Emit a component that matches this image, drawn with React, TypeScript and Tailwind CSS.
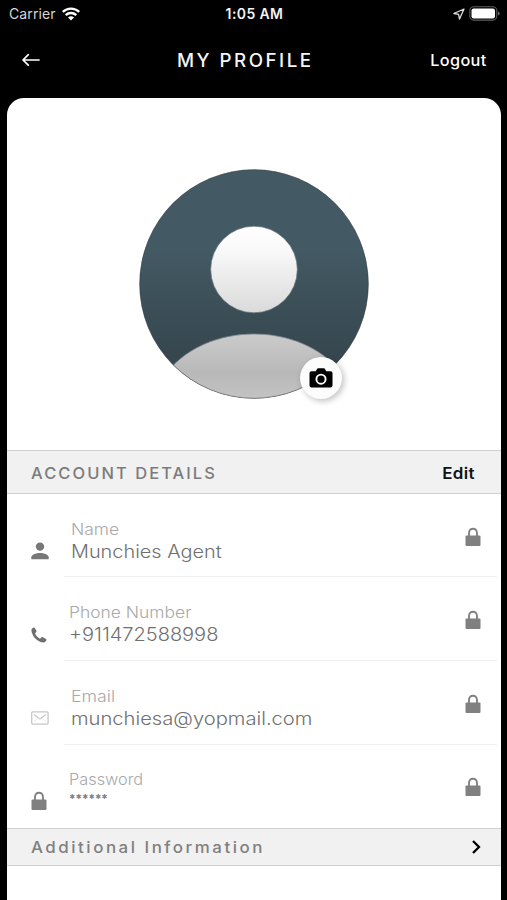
import type { ReactNode } from 'react';

function LockIcon() {
  return (
    <svg viewBox="0 0 16 20" className="block h-5 w-4" fill="none">
      <path d="M4 9V6.2C4 3.4 5.6 1.8 8 1.8s4 1.6 4 4.4V9" stroke="#808080" strokeWidth="1.9" />
      <rect x="0.5" y="8.6" width="15" height="10.4" rx="1" fill="#808080" />
    </svg>
  );
}

function PersonIcon() {
  return (
    <svg viewBox="0 0 18 18" className="block size-[18px]" fill="#777">
      <circle cx="9" cy="4.6" r="4.2" />
      <path d="M0.3 17.2v-2c0-2.5 5-4.1 8.7-4.1s8.7 1.6 8.7 4.1v2z" />
    </svg>
  );
}

function PhoneIcon() {
  return (
    <svg viewBox="0 0 16 16" className="mt-0.5 block size-4" fill="#6f6f6f">
      <path d="M0.4 3.2C.3 2.3 1.3 1 2.5.5c.6-.2 1 0 1.3.5l1.6 2.7c.3.6.2 1-.2 1.4l-.8.9c-.3.3-.3.6-.1 1 .9 1.7 2.400 3.200 4.300 4.400.4.2.7.2 1-.1l1-1c.4-.4.8-.4 1.300-.1l3.100 1.800c.5.3.6.8.4 1.300-.5 1.200-1.600 2.200-2.800 2.200C6.300 15.300.900 9 .400 3.200z" />
    </svg>
  );
}

function MailIcon() {
  return (
    <svg viewBox="0 0 18 14" className="mt-0.5 block h-3.5 w-[18px]" fill="none" stroke="#c8c8c8" strokeWidth="1.3">
      <rect x="0.7" y="0.9" width="16.4" height="12.2" rx="1.2" />
      <path d="M3 3.500l5 4c.6.4 1.200.4 1.800 0l5-4" />
      <path d="M3 11l3.200-3.200M14.800 11l-3.200-3.200" stroke="#e2e2e2" strokeWidth="0.8" />
    </svg>
  );
}

function StatusBar() {
  return (
    <div className="grid h-7 grid-cols-3 items-center pl-[9px] pr-[7px] text-[14px] leading-[28px]">
      <div className="flex items-center gap-[6px]">
        <span className="tracking-[0.12px] text-[#d6d6d6]">Carrier</span>
        <svg viewBox="0 0 18 14" className="-mt-px h-3.5 w-[18px]" fill="none" stroke="#fff" strokeWidth="2.3">
          <path d="M0.800 4.800C5.400.500 12.600.500 17.200 4.800" />
          <path d="M3.700 8.100c3-2.800 7.600-2.800 10.600 0" />
          <path d="M6 10.400c1.700-1.500 4.300-1.500 6 0L9 13.600z" fill="#fff" stroke="none" />
        </svg>
      </div>
      <span className="text-center font-semibold tracking-[0.400px] text-[#f2f2f2]">1:05 AM</span>
      <div className="flex items-center justify-end gap-[4px]">
        <svg viewBox="0 0 12 12" className="size-3" fill="none" stroke="#ddd" strokeWidth="1.300" strokeLinejoin="round">
          <path d="M11 1L.9 5.500l4.700.9.900 4.700z" />
        </svg>
        <svg viewBox="0 0 31 15" className="-mt-px h-[15px] w-[31px]">
          <rect x="0.800" y="0.700" width="27" height="13.400" rx="4" fill="none" stroke="#5e5e5e" strokeWidth="1.100" />
          <rect x="2.500" y="2.400" width="23.500" height="10" rx="2.200" fill="#fff" />
          <path d="M29 5.200q1.700.7 1.700 2.200T29 9.600z" fill="#6a6a6a" />
        </svg>
      </div>
    </div>
  );
}

function Header() {
  return (
    <header className="grid h-[70px] grid-cols-[154px_1fr_auto] items-center pb-[6px] pl-[23px] pr-[21px]">
      <svg viewBox="0 0 18 14" className="-ml-px h-3.5 w-[18px]" fill="none" stroke="#fff" strokeWidth="1.700" strokeLinecap="round" strokeLinejoin="round">
        <path d="M17 7H1.200M6.300 1.700L1 7l5.300 5.200" />
      </svg>
      <h1 className="origin-left scale-x-[1.04] pt-px text-[18px] font-medium leading-6 tracking-[2.400px] text-[#f4f4f4]">MY PROFILE</h1>
      <span className="origin-right scale-x-[1.05] pt-px text-right text-[15.500px] font-medium leading-6 tracking-[0.300px]">Logout</span>
    </header>
  );
}

function Avatar() {
  return (
    <div className="relative size-[232px]">
      <svg viewBox="0 0 232 232" className="block size-[232px]">
        <defs>
          <linearGradient id="bg" x1="0" y1="0" x2="0" y2="1">
            <stop offset="0" stopColor="#435a64" />
            <stop offset="0.35" stopColor="#435963" />
            <stop offset="0.800" stopColor="#36474f" />
            <stop offset="1" stopColor="#36474f" />
          </linearGradient>
          <linearGradient id="head" x1="0" y1="0" x2="0" y2="1">
            <stop offset="0" stopColor="#fff" />
            <stop offset="0.300" stopColor="#f8f8f8" />
            <stop offset="1" stopColor="#dadada" />
          </linearGradient>
          <linearGradient id="body" x1="0" y1="0" x2="0" y2="1">
            <stop offset="0" stopColor="#cbcbcb" />
            <stop offset="0.600" stopColor="#b8b8b8" />
            <stop offset="1" stopColor="#c4c4c4" />
          </linearGradient>
          <clipPath id="disc">
            <circle cx="116" cy="116" r="114.500" />
          </clipPath>
        </defs>
        <circle cx="116" cy="116" r="114.500" fill="url(#bg)" />
        <path clipPath="url(#disc)" d="M30 203C50 179 82 166 116 166s66 13 86 37v29H30z" fill="url(#body)" stroke="#7c868b" strokeWidth="0.800" />
        <circle cx="116" cy="101.500" r="43.300" fill="url(#head)" stroke="#68777e" strokeWidth="0.700" />
        <circle cx="116" cy="116" r="114.300" fill="none" stroke="#3d4143" strokeOpacity="0.600" strokeWidth="0.800" />
      </svg>
      <button className="absolute left-[162px] top-[189px] flex size-[42px] items-center justify-center rounded-full bg-[#fcfcfc] shadow-[2px_2px_6px_rgba(0,0,0,0.250)]">
        <svg viewBox="0 0 24 20" className="h-5 w-6">
          <path d="M2.500 3.300h4.200l1.500-2.500q.3-.5.900-.5h5.800q.6 0 .9.500l1.500 2.500h4.200q2 0 2 2v12.200q0 2-2 2h-19q-2 0-2-2V5.300q0-2 2-2z" fill="#000" />
          <circle cx="12" cy="11.200" r="4.600" fill="none" stroke="#fff" strokeWidth="1.900" />
        </svg>
      </button>
    </div>
  );
}

interface FieldProps {
  icon: ReactNode;
  label: ReactNode;
  value: ReactNode;
  height: string;
  last?: boolean;
}

function Field({ icon, label, value, height, last }: FieldProps) {
  return (
    <div className={`flex ${height}`}>
      <div className={`flex w-[57px] shrink-0 items-start pl-6 ${last ? 'pt-[46px]' : 'pt-12'}`}>{icon}</div>
      <div className={`mr-1 flex min-w-0 flex-1 justify-between border-b pr-[16px] ${last ? 'border-transparent' : 'border-[#f0f0f0]'}`}>
        <div className={`flex flex-col items-start ${last ? 'pt-[23px]' : 'pt-6'}`}>
          {label}
          {value}
        </div>
        <div className={last ? 'pt-8' : 'pt-[32.5px]'}><LockIcon /></div>
      </div>
    </div>
  );
}

export default function App() {
  return (
    <div className="flex h-[900px] w-[507px] flex-col overflow-hidden bg-black font-['Inter','Liberation_Sans',sans-serif] text-white">
      <StatusBar />
      <Header />
      <main className="ml-[7px] mr-[6px] flex-1 rounded-t-[17px] bg-white">
        <section className="flex h-[352px] justify-center pt-[70px]">
          <Avatar />
        </section>
        <section className="flex h-[44px] items-center justify-between border-y border-[#cfcfcf] bg-[#f1f1f1] pl-[24px] pr-[26px]">
          <h2 className="origin-left scale-x-[1.03] pt-px text-[16px] font-medium tracking-[2px] text-[#7b7b7b]">ACCOUNT DETAILS</h2>
          <span className="origin-right scale-x-[1.06] pt-px text-[16px] font-semibold tracking-[0.300px] text-[#111]">Edit</span>
        </section>
        <section>
          <Field
            height="h-[83px]"
            icon={<PersonIcon />}
            label={<span className="ml-[7px] origin-left scale-x-[1.09] text-[16px] font-light leading-[22px] text-[#a9a9a9]">Name</span>}
            value={<span className="ml-[7px] origin-left scale-x-[1.105] text-[18px] font-light leading-[24px] text-[#707070]">Munchies Agent</span>}
          />
          <Field
            height="h-[84px]"
            icon={<PhoneIcon />}
            label={<span className="ml-[5px] origin-left scale-x-[1.09] text-[16px] font-light leading-[22px] text-[#a9a9a9]">Phone Number</span>}
            value={<span className="ml-[5px] origin-left scale-x-[1.11] text-[18px] font-light leading-[24px] text-[#707070]">+911472588998</span>}
          />
          <Field
            height="h-[84px]"
            icon={<MailIcon />}
            label={<span className="ml-[7px] origin-left scale-x-[1.11] text-[16px] font-light leading-[22px] text-[#a9a9a9]">Email</span>}
            value={<span className="ml-[7px] origin-left scale-x-[1.12] text-[18px] font-light leading-[24px] text-[#707070]">munchiesa@yopmail.com</span>}
          />
          <Field
            height="h-[83px]"
            last
            icon={<LockIcon />}
            label={<span className="ml-[5px] origin-left scale-x-[1.02] text-[16px] font-light leading-[22px] text-[#a9a9a9]">Password</span>}
            value={<span className="ml-[5px] text-[12px] font-semibold leading-[18px] text-[#777]">******</span>}
          />
        </section>
        <section className="flex h-[38px] items-center justify-between border-y border-[#cfcfcf] bg-[#f1f1f1] pl-[24px] pr-[20px]">
          <h2 className="origin-left scale-x-[1.055] text-[16px] font-medium tracking-[2.400px] text-[#808080]">Additional Information</h2>
          <svg viewBox="0 0 10 14" className="h-3.5 w-2.5" fill="none" stroke="#000" strokeWidth="2.300">
            <path d="M2 1l6 6-6 6" />
          </svg>
        </section>
      </main>
    </div>
  );
}
